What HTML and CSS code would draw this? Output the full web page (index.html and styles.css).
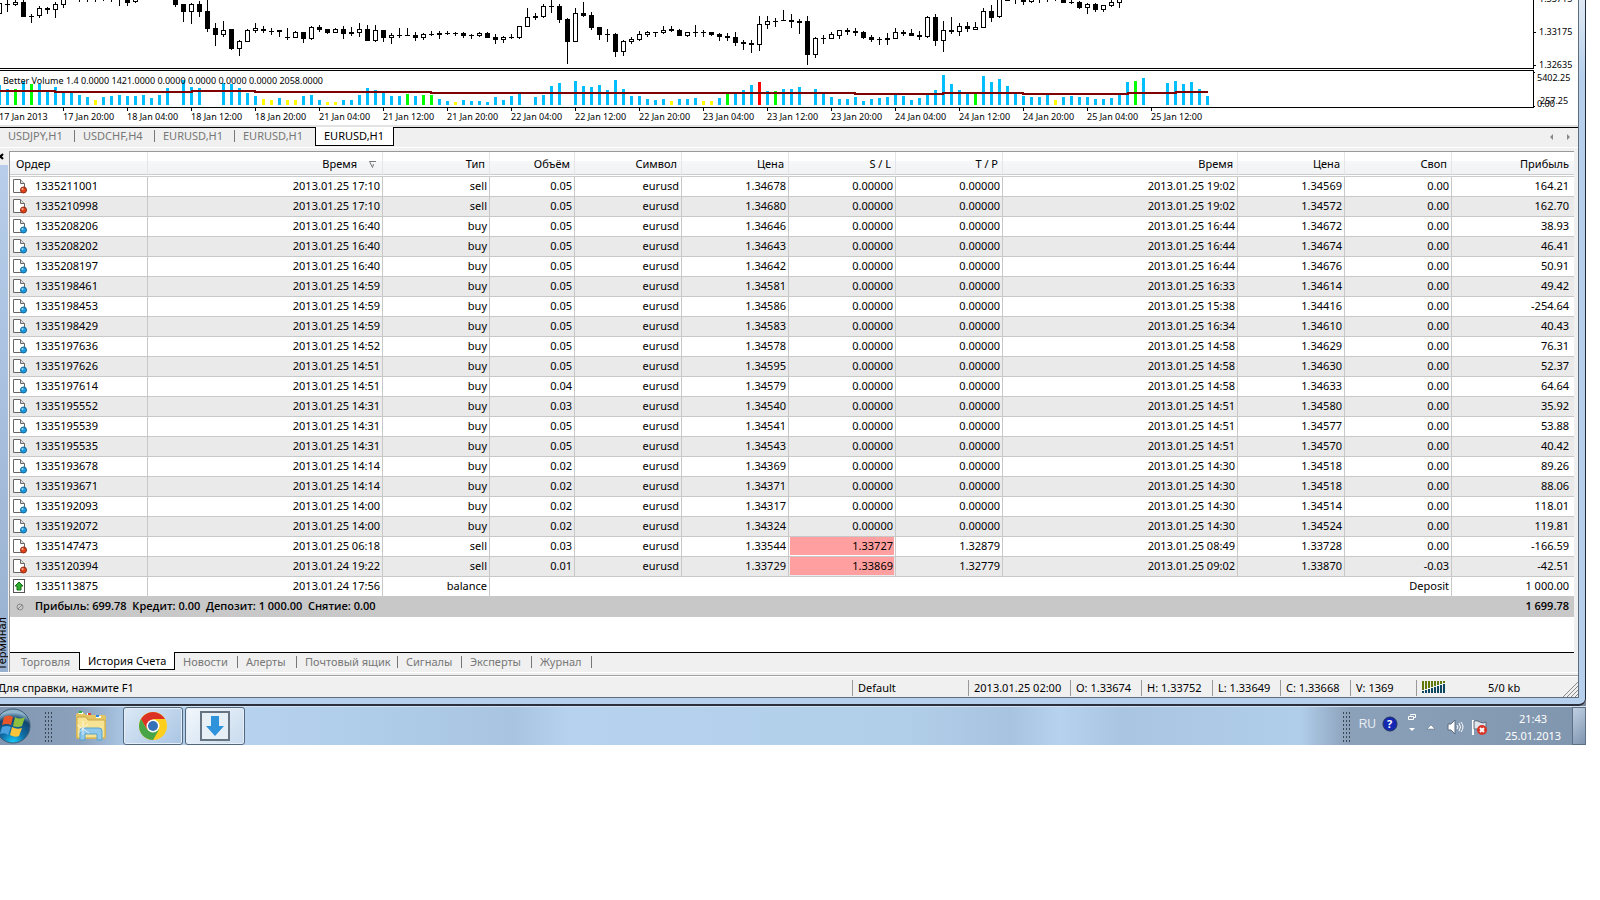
FILE: index.html
```html
<!DOCTYPE html>
<html lang="ru">
<head>
  <meta charset="UTF-8">
  <meta name="viewport" content="width=device-width, initial-scale=1.0">
  <title>Терминал - История Счета</title>
  <link rel="stylesheet" href="styles.css">
</head>
<body>
  <div class="screen">
    <div class="window">
      <div class="client">
        <!-- Chart -->
        <section class="chart">
          <div class="plots">
            <svg class="candles" id="candles" width="100%" height="69"></svg>
            <svg class="volume" id="volume" width="100%" height="38"></svg>
            <div class="dates" id="dates"></div>
          </div>
          <svg class="scale" width="44" height="125">
            <path d="M0 32.5h2M0 65.5h2M0 72.5h1M0 106.5h1" stroke="#000"/>
            <text x="5" y="2">1.33715</text>
            <text x="5" y="35">1.33175</text>
            <text x="5" y="68">1.32635</text>
            <text x="3" y="81">5402.25</text>
            <text x="6" y="104">257.25</text>
            <text x="3" y="107">0.00</text>
          </svg>
        </section>

        <nav class="chart-tabs">
          <button>USDJPY,H1</button>
          <button>USDCHF,H4</button>
          <button>EURUSD,H1</button>
          <button>EURUSD,H1</button>
          <button class="active">EURUSD,H1</button>
          <svg class="arrows" width="22" height="8" fill="#888">
            <path d="M4 1v6L1 4z M18 1v6l3-3z"/>
          </svg>
        </nav>

        <!-- Terminal panel -->
        <section class="terminal">
          <div class="side">
            <button class="close" aria-label="Закрыть">
              <svg width="4" height="7"><path d="M-2 1l5 5M3 1l-5 5" stroke="#000" stroke-width="2"/></svg>
            </button>
            <div class="side-title"><span>Терминал</span></div>
          </div>
          <div class="panel">
            <table class="history">
              <colgroup>
                <col class="c-order"><col class="c-time"><col class="c-std"><col class="c-vol">
                <col class="c-std"><col class="c-std"><col class="c-std"><col class="c-std">
                <col class="c-time"><col class="c-std"><col class="c-std"><col>
              </colgroup>
              <thead>
                <tr>
                  <th class="first">Ордер</th>
                  <th>Время<svg class="sort" width="8" height="8"><path d="M7 1.5H.5L3.500 7.500L4.500 4" fill="none" stroke="#777"/></svg></th>
                  <th>Тип</th>
                  <th>Объём</th>
                  <th>Символ</th>
                  <th>Цена</th>
                  <th>S / L</th>
                  <th>T / P</th>
                  <th>Время</th>
                  <th>Цена</th>
                  <th>Своп</th>
                  <th>Прибыль</th>
                </tr>
              </thead>
              <tbody id="orders"></tbody>
              <tfoot>
                <tr>
                  <td class="first" colspan="11">
                    <svg class="sum-icon" width="16" height="16"><circle cx="8" cy="9" r="3" fill="#ccc" stroke="#888"/><path d="M6 11l4-4" stroke="#888"/></svg><span>Прибыль: 699.78&nbsp; Кредит: 0.00&nbsp; Депозит: 1 000.00&nbsp; Снятие: 0.00</span>
                  </td>
                  <td>1 699.78</td>
                </tr>
              </tfoot>
            </table>
            <nav class="tabs">
              <button>Торговля</button>
              <button class="active">История Счета</button>
              <button>Новости</button>
              <button>Алерты</button>
              <button>Почтовый ящик</button>
              <button>Сигналы</button>
              <button>Эксперты</button>
              <button>Журнал</button>
            </nav>
          </div>
        </section>

        <footer class="status">
          <span class="help">Для справки, нажмите F1</span>
          <span>Default</span>
          <span>2013.01.25 02:00</span>
          <span>O: 1.33674</span>
          <span>H: 1.33752</span>
          <span>L: 1.33649</span>
          <span>C: 1.33668</span>
          <span>V: 1369</span>
          <span class="net">
            <svg id="signal" width="24" height="13"></svg>
            <span class="traffic">5/0 kb</span>
            <svg class="resize" width="15" height="15"><path d="M0 15L15 0M4 15L15 4M8 15L15 8M12 15l3-3" stroke="#888" stroke-width="1"/></svg>
          </span>
        </footer>
      </div>
    </div>

    <!-- Taskbar -->
    <div class="taskbar">
      <button class="start" aria-label="Пуск">
        <svg width="32" height="38">
          <defs>
            <radialGradient id="orb" cx=".5" cy="1" r=".9">
              <stop offset="0" stop-color="#19d3ff"/>
              <stop offset=".4" stop-color="#0f6fa8"/>
              <stop offset=".8" stop-color="#12456f"/>
              <stop offset="1" stop-color="#8fb4cc"/>
            </radialGradient>
          </defs>
          <circle cx="13" cy="19" r="17" fill="url(#orb)" stroke="#3c5a75"/>
          <path d="M4 10q5-3 9 0l-2 8q-4-2-9 0z" fill="#e8562a"/>
          <path d="M15 10q5 3 10 0l-3 9q-4 2-9 0z" fill="#8fbf3f"/>
          <path d="M2 20q5-2 9 0l-3 8q-3-3-8-1z" fill="#4aa0df"/>
          <path d="M12 20q5 3 10 1l-3 8q-4 2-9-1z" fill="#fcc43a"/>
        </svg>
      </button>
      <span class="dots left-dots"></span>
      <button class="task explorer" aria-label="Проводник">
        <svg width="34" height="32">
          <path d="M2 5q0-2 2-2h6l2 2h18q2 0 2 2v20q0 2-2 2H4q-2 0-2-2z" fill="#e3c563"/>
          <path d="M3 7h9l2 3h17v17q0 1-1 1H3z" fill="#f6e394" stroke="#c9a548"/>
          <path d="M5 3h4M13 4h4M22 7h5" stroke-width="2" stroke="#fff"/>
          <path d="M5 2h3" stroke="#24b534" stroke-width="2"/><path d="M14 4h3" stroke="#d43" stroke-width="2"/><path d="M22 6h3" stroke="#38d" stroke-width="2"/>
          <path d="M6 30V21q0-3 3-3h16q3 0 3 3v9h-5v-6H11v6z" fill="#8ec8ea" stroke="#5ba3cc"/>
          <path d="M3 15l12 8M14 14l-10 9M9 11v14" stroke="#fff" stroke-opacity=".7"/>
        </svg>
      </button>
      <button class="task open" aria-label="Chrome">
        <svg width="30" height="30" viewBox="-15 -15 30 30">
          <circle r="14" fill="#fdcf1c"/>
          <path d="M-12.100-7A14 14 0 0 1 12.100-7L0-7L-6 3.500z" fill="#dc3226"/>
          <path d="M-12.100-7A14 14 0 0 0 0 14L6 3.500L-6 3.500z" fill="#47a447"/>
          <circle r="6.500" fill="#fff"/><circle r="5" fill="#3471b8"/>
        </svg>
      </button>
      <button class="task open light" aria-label="Загрузки">
        <svg width="30" height="30">
          <rect x="1" y="1" width="28" height="28" fill="#e6eef6" stroke="#667380" stroke-width="2"/>
          <path d="M11 5h8v10h5l-9 10-9-10h5z" fill="#2f93dc"/>
        </svg>
      </button>

      <div class="tray">
        <span class="dots"></span>
        <button class="lang">RU</button>
        <svg class="q" width="16" height="18">
          <circle cx="8" cy="9" r="7" fill="#1428b4" stroke="#24345c"/>
          <text x="5" y="13">?</text>
        </svg>
        <svg class="langbar" width="10" height="20"><path d="M3.500 2.500V1.500h5v3h-2M1.500 3.500h5v3h-5z" stroke="#fff" fill="none"/><path d="M2 15h6l-3 3z" fill="#fff"/></svg>
        <svg class="up" width="10" height="8"><path d="M1 6l4-4 4 4z" fill="#fff" stroke="#5b6c80" stroke-width=".5"/></svg>
        <svg class="speaker" width="17" height="16"><path d="M1 5h3l4-4v14l-4-4H1z" fill="#fff" stroke="#5b6c80"/><path d="M10 6q2 2 0 4M12 4q3 4 0 8M14 3q4 5 0 10" stroke="#fff" fill="none"/></svg>
        <svg class="flag" width="17" height="17"><path d="M2 1v15" stroke="#fff" stroke-width="2"/><path d="M3 2q3-1 6 1t6 0v7H3z" fill="#dfe5ea" stroke="#5b6c80"/><circle cx="11" cy="11" r="5" fill="#d93325"/><path d="M9 9l4 4M13 9l-4 4" stroke="#fff" stroke-width="2"/></svg>
        <time class="clock">21:43<br>25.01.2013</time>
        <button class="show-desktop" aria-label="Рабочий стол"></button>
      </div>
    </div>
  </div>
  <script src="script.js"></script>
</body>
</html>
```
FILE: styles.css
```css
body {
  margin: 0;
  background: #fff;
  font-family: "Noto Sans", "DejaVu Sans", sans-serif;
  font-size: 11px;
  line-height: 16px;
  color: #000;
}
button {
  margin: 0;
  padding: 0;
  border: 0;
  background: none;
  font: inherit;
  color: inherit;
  white-space: nowrap;
}
svg {
  display: block;
}
.screen {
  margin-right: 14px;
  overflow: hidden;
}

/* Window frame */
.window {
  padding: 0 6px 6px 0;
  background: linear-gradient(#e0e9f4, #b5cfec 78px);
  border-right: 1px solid #222b3a;
  border-bottom: 2px solid #2b303c;
  border-bottom-right-radius: 7px;
  box-shadow: 0 0 0 8px #7b8a9c;
}
.client {
  background: #f0f0f0;
  border-right: 1px solid #5e6d7c;
  border-bottom: 1px solid #5e6d7c;
}

/* Chart */
.chart {
  display: flex;
  height: 125px;
  background: #fff;
  border-bottom: 2px solid #e3e3e3;
  overflow: hidden;
}
.plots {
  flex: 1;
  min-width: 0;
}
.candles {
  border-right: 1px solid #000;
  border-bottom: 1px solid #000;
  box-sizing: border-box;
}
.volume {
  margin-top: 1px;
  border: 1px solid #000;
  border-left: 0;
  box-sizing: border-box;
}
.volume text, .scale text {
  font-size: 9px;
}
.scale {
  flex: none;
}
.dates {
  display: flex;
  margin-left: -1px;
  font-size: 9px;
}
.dates span {
  flex: none;
  width: 64px;
  padding-top: 1px;
  white-space: nowrap;
  background: linear-gradient(#000, #000) no-repeat 0 0 / 1px 3px;
}

/* Chart tabs */
.chart-tabs {
  position: relative;
  display: grid;
  grid-template-columns: 75px repeat(3, 80px) 79px;
  height: 19px;
  border-top: 1px solid #000;
  border-bottom: 1px solid #fff;
  margin-bottom: 3px;
  color: #777;
}
.chart-tabs button, .tabs button {
  height: 16px;
  padding-left: 8px;
  text-align: left;
  background: linear-gradient(#777, #777) no-repeat 100% 2px / 1px 12px;
}
.chart-tabs button:nth-child(4) {
  background: none;
}
.chart-tabs .active, .tabs .active {
  height: 18px;
  margin-top: -1px;
  border: 1px solid #000;
  border-top: 0;
  background: #fff;
  color: #000;
}
.chart-tabs .active {
  height: 19px;
}
.arrows {
  position: absolute;
  right: 7px;
  top: 5px;
}

/* Terminal */
.terminal {
  display: flex;
  height: 521px;
  margin-bottom: 2px;
  border-bottom: 1px solid #fff;
}
.side {
  flex: none;
  display: flex;
  flex-direction: column;
  width: 9px;
}
.close {
  height: 14px;
  padding-bottom: 4px;
}
.side-title {
  flex: 1;
  display: flex;
  justify-content: flex-end;
  width: 8px;
  overflow: hidden;
  background: linear-gradient(#b7cdea, #98b1d0);
}
.side-title span {
  writing-mode: vertical-rl;
  transform: rotate(180deg);
  line-height: 12px;
  padding-top: 2px;
}
.panel {
  flex: 1;
  min-width: 0;
  display: flex;
  flex-direction: column;
  margin-right: 4px;
  border-top: 1px solid #999;
  border-left: 1px solid #999;
  background: #fff;
}
.history {
  width: 100%;
  table-layout: fixed;
  border-spacing: 0;
}
.c-order { width: 138px; }
.c-time { width: 235px; }
.c-std { width: 107px; }
.c-vol { width: 85px; }

.history th {
  height: 20px;
  padding: 2px 4px 0 0;
  text-align: right;
  font-weight: normal;
  background: linear-gradient(#fff 40%, #f5f7f9 42%, #f0f2f4);
  border-right: 1px solid #e3e5e8;
  border-bottom: 3px double #ccc;
}
.history th.first {
  padding-left: 6px;
  text-align: left;
}
.sort {
  display: inline-block;
  margin: 0 1px 0 12px;
}
.history td {
  height: 18px;
  padding: 0 2px 1px 0;
  text-align: right;
  white-space: nowrap;
  border-right: 1px solid #c8c8c8;
  border-bottom: 1px solid #c8c8c8;
}
.history tbody tr:nth-child(even) {
  background: #eaeaea;
}
.history th:last-child, .history td:last-child {
  border-right: 0;
  padding-right: 5px;
}
.history td.first svg {
  float: left;
  margin: 0 7px 0 2px;
}
.history td.first {
  text-align: left;
}
.history td.hit {
  padding: 0 1px 1px;
  background: #ff9f9f content-box;
}
.hit span {
  display: block;
  padding: 1px 1px 1px 0;
}
.history tfoot td {
  font-family: "Open Sans", "Noto Sans", sans-serif;
  background: #c8c8c8;
  border-color: #c8c8c8;
  border-right: 0;
  font-weight: 600;
}

/* Terminal tabs */
.tabs {
  display: grid;
  grid-template-columns: 69px 96px 63px 59px 101px 64px 70px 60px;
  height: 19px;
  margin-top: auto;
  border-top: 1px solid #000;
  background: #f0f0f0;
  color: #777;
}
.tabs button {
  height: 18px;
  background-position: 100% 3px;
}
.tabs button:first-child {
  padding-left: 11px;
  background: none;
}

/* Status bar */
.status {
  display: grid;
  grid-template-columns: 1fr 116px 102px 71px 71px 68px 70px 66px 162px;
  align-items: end;
  height: 21px;
  border-top: 1px solid #a0a0a0;
  box-shadow: inset 0 1px #fff;
}
.status > span {
  height: 16px;
  margin-bottom: 1px;
  padding-left: 5px;
  border-left: 1px solid #999;
  white-space: nowrap;
}
.status .help {
  margin-left: -8px;
}
.status .net {
  display: flex;
  position: relative;
}
.net svg {
  margin-top: 1px;
}
.traffic {
  margin-left: 42px;
}
.net .resize {
  margin: 2px 0 0 auto;
}

/* Taskbar */
.taskbar {
  position: relative;
  display: flex;
  align-items: flex-start;
  height: 38px;
  border-top: 1px solid #d5e2ef;
  background: linear-gradient(90deg, #8197b1, #8ca2bc 80px, #a9c6e4 125px, #b6d2ee 240px, #aecbe7 390px, #a8c4e0 515px, #b6d2ee 570px, #b2cfea 900px, #a8c3df 1010px, #b6d2ee 1060px, #a9c5e1 1120px, #b0cdea 1300px, #8ba0b9 1350px, #8095ae);
  color: #fff;
}
.start {
  width: 44px;
}
.dots {
  width: 9px;
  height: 31px;
  margin-top: 4px;
  background: radial-gradient(#3b4655 35%, transparent 40%) 0 0 / 3px 4px;
}
.task {
  display: flex;
  justify-content: center;
  align-items: center;
  width: 60px;
  height: 38px;
}
.explorer {
  margin: 0 2px 0 8px;
}
.open {
  box-sizing: border-box;
  margin-right: 2px;
  border: 1px solid #53677d;
  border-radius: 3px;
  background: linear-gradient(135deg, #dce9f6, #a9c5e3);
  box-shadow: inset 0 0 0 1px #e3eef9;
}
.light {
  background: linear-gradient(135deg, #f3f7fb, #c8dbef);
}
.tray {
  display: flex;
  align-items: flex-start;
  margin-left: auto;
}
.lang {
  margin: 9px 6px 0 8px;
  font-family: "Liberation Sans", sans-serif;
  font-size: 12px;
  color: #e6ecf3;
}
.q {
  margin-top: 8px;
}
.q text {
  font-weight: bold;
  fill: #fff;
}
.langbar {
  margin: 6px 9px 0;
}
.up {
  margin-top: 16px;
}
.speaker {
  margin: 12px 7px 0 11px;
}
.flag {
  margin-top: 12px;
}
.clock {
  width: 78px;
  margin: 3px 0 0 6px;
  line-height: 17px;
  text-align: center;
}
.show-desktop {
  box-sizing: border-box;
  width: 14px;
  height: 38px;
  border: 1px solid #5d6f85;
  background: linear-gradient(135deg, #c0d0e2, #7f95b0);
}
```
FILE: script.js
```js
// candles: [index, high, body top, body bottom, low, hollow]
const candles = [
  [0,3,3,14,14,1],[1,0,4,5,12],[2,0,2,5,6,1],[3,0,2,17,17],[4,14,16,17,23],[5,6,8,16,18,1],[6,7,8,10,14],[7,2,4,10,18,1],
  [8,0,-2,5,8,1],[10,0,0,0,2],[11,0,0,0,2],[12,0,0,0,2],[13,0,0,0,1],[14,0,0,0,2],[15,0,0,0,6],[16,0,0,3,6],[17,0,-2,2,3,1],
  [22,0,0,5,7],[23,4,4,12,22],[24,3,4,12,24,1],[25,1,4,12,17],[26,0,11,29,32],[27,23,28,35,46],[28,21,30,35,37,1],
  [29,29,29,49,50],[30,40,41,49,56,1],[31,29,30,42,42,1],[32,23,28,31,33,1],[33,26,29,31,33],[34,28,31,32,35],
  [35,30,30,32,37],[36,28,37,38,40],[37,31,32,38,38,1],[38,32,32,39,43],[39,26,27,39,40,1],[40,25,27,30,32],
  [41,29,29,33,34],[42,28,29,33,33,1],[43,26,29,34,39],[44,27,32,34,36],[45,23,29,33,37,1],[46,25,29,41,41],
  [47,25,30,41,42,1],[48,30,30,38,42],[49,33,35,38,44,1],[50,28,35,36,38],[51,28,35,36,36],[52,32,35,38,41],
  [53,33,34,38,40,1],[54,31,34,35,36],[55,31,33,35,39],[56,31,33,34,35],[57,32,33,34,36],[58,32,33,36,38],
  [59,34,35,36,39],[60,32,33,36,37,1],[61,32,33,38,38],[62,34,37,40,44],[63,36,37,40,43,1],[64,34,37,38,39],
  [65,26,26,38,39,1],[66,8,17,27,27,1],[67,13,16,18,20],[68,4,6,17,18,1],[69,0,6,7,13],[70,4,6,20,23],[71,18,19,42,64],
  [72,8,13,42,42,1],[73,2,13,16,17],[74,12,15,28,30],[75,27,27,35,40],[76,29,34,35,42],[77,33,34,52,57],[78,40,41,52,56,1],
  [79,37,39,42,44,1],[80,31,34,40,41,1],[81,31,32,35,37,1],[82,32,32,33,37],[83,26,30,33,34,1],[84,26,29,31,32],
  [85,29,30,36,36],[86,32,32,36,37,1],[87,25,32,33,37],[88,30,32,33,37],[89,32,32,35,36],[90,33,34,37,41],[91,33,36,38,41],
  [92,32,37,43,46],[93,40,42,44,50],[94,40,43,45,53],[95,16,24,45,51,1],[96,16,21,25,29,1],[97,18,21,22,27],[98,10,20,21,21],
  [99,14,20,22,28],[100,19,21,23,34],[101,16,21,55,65],[102,37,38,55,58,1],[103,35,38,39,44],[104,32,34,39,39,1],
  [105,30,30,36,39,1],[106,28,30,32,35],[107,28,31,33,36],[108,31,32,38,39],[109,35,37,40,42],[110,37,39,40,45],
  [111,33,38,40,45],[112,28,32,39,39,1],[113,30,32,34,36],[114,29,33,36,36],[115,31,35,37,40],[116,16,17,37,38,1],
  [117,14,17,41,46],[118,21,30,41,52,1],[119,17,30,32,34],[120,23,26,32,36,1],[121,22,26,29,32],[122,22,27,30,30,1],
  [123,8,11,28,28,1],[124,5,11,18,22],[125,0,-2,17,18,1],[126,0,0,1,1],[127,0,0,0,4],[128,0,0,2,5],[129,0,-2,2,3,1],
  [130,0,0,0,3],[131,0,0,0,2],[132,0,0,0,1],[133,0,0,3,3],[134,0,2,3,4],[135,1,2,8,9],[136,3,4,8,14,1],[137,3,4,10,12],
  [138,5,5,10,12,1],[139,0,2,6,7,1],[140,0,-2,3,8,1]
];

// volume bar tops, one per candle slot; 0 = no bar, letter = colour
const volume = ("85 89 89g 81 84g 84 92 87 93 93 95 97 100y 97 96 95 96 96 95 98 95 88 0 80 87 88 0 0 83 84 88 93 96 99y 100y 98 " +
  "100y 100y 96 95 100 102y 102y 100 100 95 88 90 93 96 96 94g 96 95g 95g 99 101 102y 100 101 101 102 97 100 96 94 0 97 95 86 83 0 " +
  "81 86 87 85 90 80 89 96 96 99 100 99 101y 99 99 98 101y 101y 98 94g 94 90 85 82r 91 91g 89 89 87 0 89 93 97 99 99 97 101 99 98 97 " +
  "95 96 100 98 95 90 75 84 90 94 94g 76 82 79 86 94 96 97 97 95 100y 97 96 97 97 99 99 98 95 82 81g 78 0 0 83 81 84 82 89 96").split(" ");
const colors = { g: "#00ff00", y: "#ffff00", r: "#ff0000" };

let out = "";
candles.forEach(([i, high, top, bottom, low, hollow]) => {
  const x = i * 8 - 1;
  out += `<rect x="${x}" y="${high}" width="1" height="${low - high}"/>`;
  if (hollow) {
    out += `<rect x="${x - 1.5}" y="${top + 0.5}" width="4" height="${bottom - top - 1}" fill="#fff" stroke="#000"/>`;
  } else {
    out += `<rect x="${x - 2}" y="${top}" width="5" height="${bottom - top}"/>`;
  }
});
document.getElementById("candles").innerHTML = out;

// the volume plot starts 71px below the top of the chart
out = "";
volume.forEach((v, i) => {
  const top = parseInt(v);
  if (top) {
    out += `<rect x="${i * 8 - 2}" y="${top - 71}" width="3" height="${105 - top}" fill="${colors[v.slice(-1)] || "#00bfff"}"/>`;
  }
});
out += '<path d="M0 20H55V21H192V20H255V21H431V22H855V23H943V22H1023V23H1128V22H1176V21H1208" fill="none" stroke="#800000" stroke-width="2"/>';
out += '<text x="3" y="13">Better Volume 1.4 0.0000 1421.0000 0.0000 0.0000 0.0000 0.0000 2058.0000</text>';
document.getElementById("volume").innerHTML = out;

const dates = ["17 Jan 2013", "17 Jan 20:00", "18 Jan 04:00", "18 Jan 12:00", "18 Jan 20:00", "21 Jan 04:00", "21 Jan 12:00",
  "21 Jan 20:00", "22 Jan 04:00", "22 Jan 12:00", "22 Jan 20:00", "23 Jan 04:00", "23 Jan 12:00", "23 Jan 20:00",
  "24 Jan 04:00", "24 Jan 12:00", "24 Jan 20:00", "25 Jan 04:00", "25 Jan 12:00"];
document.getElementById("dates").innerHTML = dates.map(d => `<span>${d}</span>`).join("");

const orders = `1335211001|25 17:10|sell|0.05|1.34678|0.00000|0.00000|19:02|1.34569|0.00|164.21
1335210998|25 17:10|sell|0.05|1.34680|0.00000|0.00000|19:02|1.34572|0.00|162.70
1335208206|25 16:40|buy|0.05|1.34646|0.00000|0.00000|16:44|1.34672|0.00|38.93
1335208202|25 16:40|buy|0.05|1.34643|0.00000|0.00000|16:44|1.34674|0.00|46.41
1335208197|25 16:40|buy|0.05|1.34642|0.00000|0.00000|16:44|1.34676|0.00|50.91
1335198461|25 14:59|buy|0.05|1.34581|0.00000|0.00000|16:33|1.34614|0.00|49.42
1335198453|25 14:59|buy|0.05|1.34586|0.00000|0.00000|15:38|1.34416|0.00|-254.64
1335198429|25 14:59|buy|0.05|1.34583|0.00000|0.00000|16:34|1.34610|0.00|40.43
1335197636|25 14:52|buy|0.05|1.34578|0.00000|0.00000|14:58|1.34629|0.00|76.31
1335197626|25 14:51|buy|0.05|1.34595|0.00000|0.00000|14:58|1.34630|0.00|52.37
1335197614|25 14:51|buy|0.04|1.34579|0.00000|0.00000|14:58|1.34633|0.00|64.64
1335195552|25 14:31|buy|0.03|1.34540|0.00000|0.00000|14:51|1.34580|0.00|35.92
1335195539|25 14:31|buy|0.05|1.34541|0.00000|0.00000|14:51|1.34577|0.00|53.88
1335195535|25 14:31|buy|0.05|1.34543|0.00000|0.00000|14:51|1.34570|0.00|40.42
1335193678|25 14:14|buy|0.02|1.34369|0.00000|0.00000|14:30|1.34518|0.00|89.26
1335193671|25 14:14|buy|0.02|1.34371|0.00000|0.00000|14:30|1.34518|0.00|88.06
1335192093|25 14:00|buy|0.02|1.34317|0.00000|0.00000|14:30|1.34514|0.00|118.01
1335192072|25 14:00|buy|0.02|1.34324|0.00000|0.00000|14:30|1.34524|0.00|119.81
1335147473|25 06:18|sell|0.03|1.33544|1.33727|1.32879|08:49|1.33728|0.00|-166.59
1335120394|24 19:22|sell|0.01|1.33729|1.33869|1.32779|09:02|1.33870|-0.03|-42.51`.split("\n");

function orderIcon(type) {
  const fill = type === "sell" ? "#e2431a" : "#1e9be0";
  return `<svg width="16" height="16"><path d="M1.500 1.500h7l4 4v9h-11z" fill="#fff" stroke="#666"/><path d="M8.500 1.500v4h4" fill="#ddd" stroke="#666"/><circle cx="11.500" cy="12" r="3" fill="${fill}" stroke="${type === "sell" ? "#8e2b12" : "#14679a"}"/><circle cx="10.500" cy="11" r="1" fill="#fff" fill-opacity=".6"/></svg>`;
}

const rows = orders.map(line => {
  const [id, open, type, lots, price, sl, tp, close, closePrice, swap, profit] = line.split("|");
  // a stop that was set gets the red cell
  const slCell = sl === "0.00000" ? `<td>${sl}</td>` : `<td class="hit"><span>${sl}</span></td>`;
  return `<tr><td class="first">${orderIcon(type)}${id}</td><td>2013.01.${open}</td><td>${type}</td><td>${lots}</td><td>eurusd</td>` +
    `<td>${price}</td>${slCell}<td>${tp}</td><td>2013.01.25 ${close}</td><td>${closePrice}</td><td>${swap}</td><td>${profit}</td></tr>`;
});
rows.push('<tr><td class="first"><svg width="16" height="16"><rect x="1.500" y="1.500" width="11" height="13" fill="#fff" stroke="#555"/><path d="M7 4l4 4H9v4H5V8H3z" fill="#2fae2f" stroke="#137013"/></svg>1335113875</td>' +
  '<td>2013.01.24 17:56</td><td>balance</td><td colspan="8">Deposit</td><td>1 000.00</td></tr>');
document.getElementById("orders").innerHTML = rows.join("");

// connection meter
out = "";
for (let i = 0; i < 8; i++) {
  const split = 10 - i;
  out += `<rect x="${i * 3}" y="0" width="2" height="${split - 1}" fill="#5f7a0a"/><rect x="${i * 3}" y="${split}" width="2" height="${12 - split}" fill="#0c4560"/>`;
}
document.getElementById("signal").innerHTML = out;
```
